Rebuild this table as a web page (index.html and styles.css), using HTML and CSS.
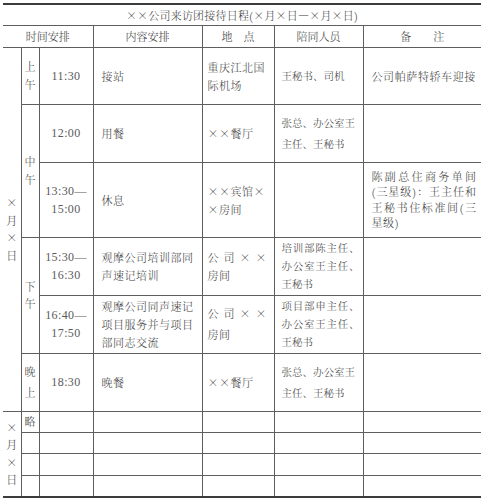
FILE: index.html
```html
<!DOCTYPE html>
<html lang="zh">
<head>
<meta charset="utf-8">
<title>接待日程</title>
<link rel="stylesheet" href="styles.css">
</head>
<body>
<table class="sched">
  <colgroup>
    <col class="w-day"><col class="w-per"><col class="w-time"><col class="w-ct"><col class="w-loc"><col class="w-ppl"><col class="w-rm">
  </colgroup>
  <tr class="h-title"><td colspan="7" class="title">××公司来访团接待日程(×月×日—×月×日)</td></tr>
  <tr class="h-head">
    <th colspan="3">时间安排</th><th>内容安排</th><th>地　点</th><th>陪同人员</th><th>备　　注</th>
  </tr>
  <tr class="h-57">
    <td rowspan="6" class="vert">×<br>月<br>×<br>日</td>
    <td class="vert">上<br>午</td>
    <td class="time">11:30</td>
    <td class="ct">接站</td>
    <td class="loc">重庆江北国<br>际机场</td>
    <td class="ppl">王秘书、司机</td>
    <td class="rm">公司帕萨特轿车迎接</td>
  </tr>
  <tr class="h-58">
    <td rowspan="2" class="vert">中<br>午</td>
    <td class="time">12:00</td>
    <td class="ct">用餐</td>
    <td class="loc">××餐厅</td>
    <td class="ppl wide">张总、办公室王<br>主任、王秘书</td>
    <td></td>
  </tr>
  <tr class="h-75">
    <td class="time">13:30—<br>15:00</td>
    <td class="ct">休息</td>
    <td class="loc">××宾馆×<br>×房间</td>
    <td></td>
    <td class="rm tight"><span class="jl">陈副总住商务单间</span><span class="jl">(三星级)：王主任和</span><span class="jl">王秘书住标准间(三</span>星级)</td>
  </tr>
  <tr class="h-58">
    <td rowspan="2" class="vert">下<br>午</td>
    <td class="time">15:30—<br>16:30</td>
    <td class="ct">观摩公司培训部同<br>声速记培训</td>
    <td class="loc"><span class="spread">公司××</span>房间</td>
    <td class="ppl"><span class="jl">培训部陈主任、</span><span class="jl">办公室王主任、</span>王秘书</td>
    <td></td>
  </tr>
  <tr class="h-58">
    <td class="time">16:40—<br>17:50</td>
    <td class="ct">观摩公司同声速记<br>项目服务并与项目<br>部同志交流</td>
    <td class="loc wide"><span class="spread">公司××</span>房间</td>
    <td class="ppl"><span class="jl">项目部申主任、</span><span class="jl">办公室王主任、</span>王秘书</td>
    <td></td>
  </tr>
  <tr class="h-58">
    <td class="vert wide">晚<br>上</td>
    <td class="time">18:30</td>
    <td class="ct">晚餐</td>
    <td class="loc">××餐厅</td>
    <td class="ppl wide">张总、办公室王<br>主任、王秘书</td>
    <td></td>
  </tr>
  <tr class="h-21">
    <td rowspan="4" class="vert">×<br>月<br>×<br>日</td>
    <td class="vert">略</td>
    <td></td><td></td><td></td><td></td><td></td>
  </tr>
  <tr class="h-21"><td></td><td></td><td></td><td></td><td></td><td></td></tr>
  <tr class="h-22"><td></td><td></td><td></td><td></td><td></td><td></td></tr>
  <tr class="h-22"><td></td><td></td><td></td><td></td><td></td><td></td></tr>
</table>
</body>
</html>
```

FILE: styles.css
```css
html, body {
  margin: 0;
  padding: 0;
  background: #ffffff;
}

.sched {
  border-collapse: collapse;
  table-layout: fixed;
  width: 478px;
  margin: 3px 0 0 3px;
  border-top: 2px solid #3c3c3c;
  border-bottom: 2px solid #3c3c3c;
  border-left: hidden;
  border-right: hidden;
  font-family: "Noto Serif CJK SC", "Noto Sans CJK SC", serif;
  font-size: 11px;
  font-weight: 300;
  line-height: 18px;
  color: #3a3a3a;
}

.w-day { width: 18px; }
.w-per { width: 18px; }
.w-time { width: 54px; }
.w-ct { width: 109px; }
.w-loc { width: 72px; }
.w-ppl { width: 89px; }
.w-rm { width: 118px; }

.sched td,
.sched th {
  border: 1px solid #5e5e5e;
  padding: 0;
  font-weight: 300;
  vertical-align: middle;
  overflow: hidden;
}

.h-title { height: 21px; }
.h-head { height: 22px; }
.h-57 { height: 57px; }
.h-58 { height: 58px; }
.h-75 { height: 75px; }
.h-21 { height: 21px; }
.h-22 { height: 22px; }

.title {
  text-align: center;
  letter-spacing: 0.2px;
  line-height: 16px;
}

.sched th {
  text-align: center;
  line-height: 16px;
}

.vert {
  text-align: center;
  line-height: 17.5px;
}

.time {
  text-align: center;
  font-family: "Liberation Serif", "Noto Serif CJK SC", serif;
  font-size: 12px;
  letter-spacing: 0.4px;
  color: #5a5a5a;
}

.ct {
  padding-left: 8px !important;
  letter-spacing: 0.5px;
}

.loc {
  padding: 0 7px 0 5px !important;
  letter-spacing: 0.5px;
}

.ppl {
  padding: 0 3px 0 7px !important;
  font-size: 10.5px;
}

.rm {
  padding: 0 5px 0 8px !important;
  letter-spacing: 0.6px;
}

.tight {
  line-height: 15.5px;
}

.wide {
  line-height: 21px;
}

.jl {
  display: block;
  white-space: nowrap;
  text-align: justify;
  text-align-last: justify;
  letter-spacing: 0;
}

.spread {
  display: block;
  white-space: nowrap;
  letter-spacing: 5px;
}
```
